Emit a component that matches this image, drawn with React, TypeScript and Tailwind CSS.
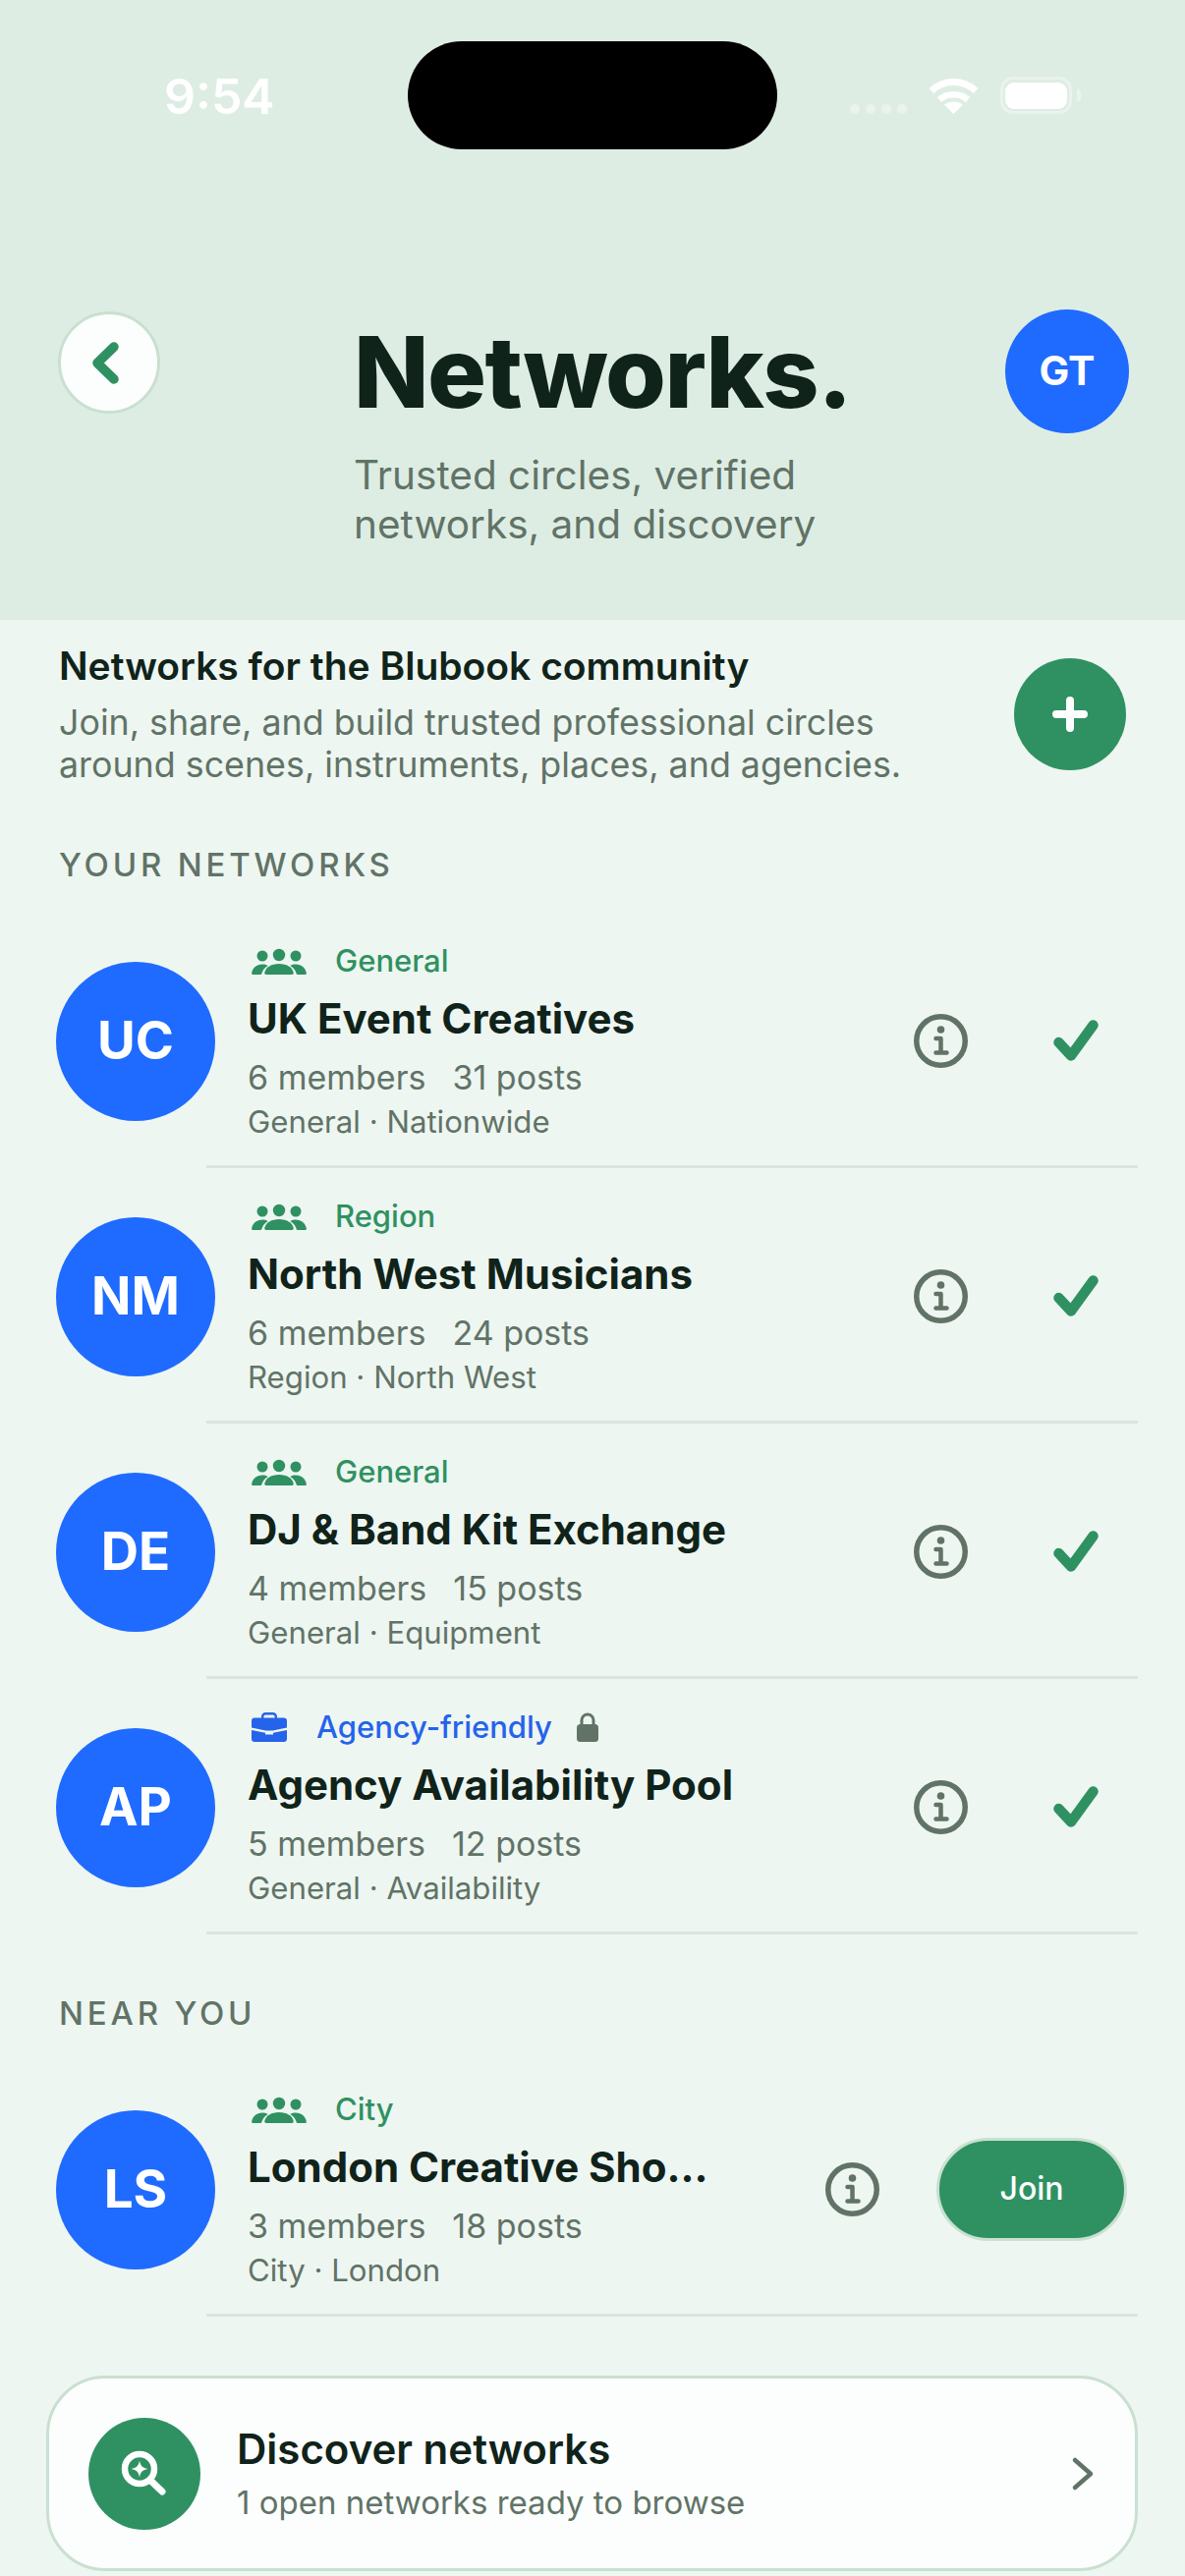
import type { ReactNode } from "react";

// Networks screen — header, community intro, joined rows, nearby rows, discover card

type Network = {
  initials: string;
  kind: "people" | "agency";
  tag: string;
  locked?: boolean;
  name: string;
  members: string;
  posts: string;
  detail: string;
};

const YOUR_NETWORKS: Network[] = [
  { initials: "UC", kind: "people", tag: "General", name: "UK Event Creatives", members: "6 members", posts: "31 posts", detail: "General · Nationwide" },
  { initials: "NM", kind: "people", tag: "Region", name: "North West Musicians", members: "6 members", posts: "24 posts", detail: "Region · North West" },
  { initials: "DE", kind: "people", tag: "General", name: "DJ & Band Kit Exchange", members: "4 members", posts: "15 posts", detail: "General · Equipment" },
  { initials: "AP", kind: "agency", tag: "Agency-friendly", locked: true, name: "Agency Availability Pool", members: "5 members", posts: "12 posts", detail: "General · Availability" },
];

const NEAR_YOU: Network[] = [
  { initials: "LS", kind: "people", tag: "City", name: "London Creative Sho...", members: "3 members", posts: "18 posts", detail: "City · London" },
];

function PeopleIcon() {
  return (
    <svg width="56" height="28" viewBox="0 0 56 28" fill="#2F9162" className="shrink-0">
      <circle cx="11" cy="9" r="5.5" />
      <circle cx="28" cy="8" r="6.2" />
      <circle cx="45" cy="9" r="5.5" />
      <path d="M15 28C13.5 28 13 27 13.4 25.5C14.8 20.5 20 17 28 17C36 17 41.2 20.5 42.6 25.5C43 27 42.5 28 41 28Z" />
      <path d="M1.5 28C0.5 28 0 27.4 0.2 26.2C1.2 21 5 17.5 11 17.5C13.2 17.5 15 18 16.6 18.9C13.6 20.6 11.4 23.2 10.5 26.5C10.3 27.2 10 28 9.5 28Z" />
      <path d="M54.5 28C55.5 28 56 27.4 55.8 26.2C54.8 21 51 17.5 45 17.5C42.8 17.5 41 18 39.4 18.9C42.4 20.6 44.6 23.2 45.5 26.5C45.7 27.2 46 28 46.5 28Z" />
    </svg>
  );
}

function BriefcaseIcon() {
  return (
    <svg width="36" height="30" viewBox="0 0 36 30" fill="#2563EB" className="shrink-0">
      <rect x="11.2" y="1.2" width="13.6" height="8" rx="3" fill="none" stroke="#2563EB" strokeWidth="2.4" />
      <path d="M3 5.5H33C34.7 5.5 36 6.8 36 8.5V15.5L21.5 18.5H14.5L0 15.5V8.5C0 6.8 1.3 5.5 3 5.5Z" />
      <path d="M0 18L14 20.8V22.5H22V20.8L36 18V27C36 28.7 34.7 30 33 30H3C1.3 30 0 28.7 0 27Z" />
    </svg>
  );
}

function LockIcon() {
  return (
    <svg width="22" height="30" viewBox="0 0 22 30" fill="#617367" className="ml-[25px] shrink-0">
      <path d="M5 14V8a6 6 0 0 1 12 0v6" fill="none" stroke="#617367" strokeWidth="3" />
      <rect x="0" y="12" width="22" height="18" rx="3.5" />
    </svg>
  );
}

function InfoIcon() {
  return (
    <svg width="55" height="55" viewBox="0 0 55 55" fill="none" stroke="#617367" strokeWidth="5.5" className="mt-[3px] shrink-0">
      <circle cx="27.5" cy="27.5" r="24.75" />
      <circle cx="27.5" cy="16" r="3.8" fill="#617367" stroke="none" />
      <path d="M22.5 25H27.5V39.5M22.5 39.5H33.5" strokeWidth="4.5" strokeLinecap="round" strokeLinejoin="round" />
    </svg>
  );
}

function CheckIcon() {
  return (
    <svg width="46" height="44" viewBox="0 0 46 44" fill="none" stroke="#2F9162" strokeWidth="10.5" strokeLinecap="round" strokeLinejoin="round" className="ml-[87px] mr-[40px] mt-[5px] shrink-0">
      <path d="M5.5 23L18 36.5L40.5 5.5" />
    </svg>
  );
}

function StatusBar() {
  return (
    <div className="flex items-start pl-[167px] pt-[42px]">
      <span className="mt-[37px] h-[38px] w-[248px] text-[50px] leading-[38px] font-semibold text-white">9:54</span>
      <div className="h-[110px] w-[376px] rounded-[55px] bg-black" />
      <div className="ml-[74px] mt-[36px] flex h-[38px] items-start">
        <div className="mt-[28px] flex gap-[6px]">
          <span className="size-[10px] rounded-full bg-[#EAF3ED]" />
          <span className="size-[10px] rounded-full bg-[#EAF3ED]" />
          <span className="size-[10px] rounded-full bg-[#EAF3ED]" />
          <span className="size-[10px] rounded-full bg-[#EAF3ED]" />
        </div>
        <svg width="51" height="38" viewBox="0 0 51 38" fill="none" stroke="#fff" className="ml-[22px] mt-[1px]">
          <path d="M3 13.5C15.5 1.5 35.5 1.5 48 13.5" strokeWidth="7" />
          <path d="M11 22.5C19 15.5 32 15.5 40 22.5" strokeWidth="6.5" />
          <path d="M25.5 37L16 27.5C22 23.5 29 23.5 35 27.5Z" fill="#fff" stroke="none" />
        </svg>
        <div className="ml-[22px] flex h-[38px] w-[73px] items-center justify-center rounded-[13px] border-[3px] border-[#EAF3ED]">
          <div className="h-[27px] w-[63px] rounded-[9px] bg-white" />
        </div>
        <div className="ml-[5px] mt-[13px] h-[12px] w-[4px] rounded-r-[3px] bg-[#EAF3ED]" />
      </div>
    </div>
  );
}

function Header() {
  return (
    <header className="h-[631px] bg-[#DEEDE3]">
      <StatusBar />
      <div className="mt-[163px] flex items-start pl-[59px] pr-[57px]">
        <button className="mt-[2px] flex size-[104px] shrink-0 items-center justify-center rounded-full border-[3px] border-[#C9E0D0] bg-[#FBFEFC]">
          <svg width="36" height="48" viewBox="0 0 36 48" fill="none" stroke="#2F9162" strokeWidth="9.5" strokeLinecap="round" strokeLinejoin="round" className="-ml-[1px]">
            <path d="M23 8L6 24.5L23 41" />
          </svg>
        </button>
        <div className="ml-[197px] flex-1">
          <h1 className="text-[100px] leading-[128px] font-extrabold tracking-[-1.5px] text-[#10231A]">Networks.</h1>
          <p className="mt-[16px] text-[40.5px] leading-[50px] text-[#617367]">
            Trusted circles, verified
            <br />
            networks, and discovery
          </p>
        </div>
        <div className="flex size-[126px] shrink-0 items-center justify-center rounded-full bg-[#1F6BFF] text-[41px] font-bold text-white">GT</div>
      </div>
    </header>
  );
}

function SectionLabel({ children }: { children: ReactNode }) {
  return <h2 className="mt-[60px] ml-[60px] text-[33px] leading-[40px] font-medium tracking-[3.8px] text-[#617367]">{children}</h2>;
}

function NetworkRow({ network, action }: { network: Network; action: ReactNode }) {
  const agency = network.kind === "agency";
  return (
    <div className="flex items-center pl-[57px]">
      <div className="mt-[1px] flex size-[162px] shrink-0 items-center justify-center rounded-full bg-[#1F6BFF] text-[53px] font-bold text-white">
        {network.initials}
      </div>
      <div className="-ml-[9px] mr-[48px] flex h-[260px] flex-1 items-center border-b-[3px] border-[#D9E6DD] pl-[42px]">
        <div className="flex-1 self-start pt-[30px]">
          <div className="flex h-[38px] items-center pl-[4px]">
            {agency ? <BriefcaseIcon /> : <PeopleIcon />}
            <span className={agency ? "ml-[30px] text-[31px] font-medium text-[#2563EB]" : "ml-[29px] text-[31px] font-medium text-[#2F9162]"}>
              {network.tag}
            </span>
            {network.locked && <LockIcon />}
          </div>
          <p className="mt-[15px] text-[42px] leading-[50px] font-bold text-[#10231A]">{network.name}</p>
          <p className="mt-[15px] text-[34px] leading-[40px] text-[#617367]">
            {network.members}
            <span className="ml-[27px]">{network.posts}</span>
          </p>
          <p className="mt-[7px] text-[31.2px] leading-[36px] text-[#617367]">{network.detail}</p>
        </div>
        {action}
      </div>
    </div>
  );
}

function App() {
  return (
    <div className="h-[2622px] w-[1206px] overflow-hidden bg-[#EEF6F1] font-['Inter',sans-serif]">
      <Header />

      <section className="flex items-start pt-[22px] pl-[60px] pr-[60px]">
        <div className="flex-1">
          <h2 className="text-[39px] leading-[50px] font-semibold text-[#10231A]">Networks for the Blubook community</h2>
          <p className="mt-[11px] text-[35.8px] leading-[43px] text-[#617367]">
            Join, share, and build trusted professional circles
            <br />
            around scenes, instruments, places, and agencies.
          </p>
        </div>
        <button className="mt-[17px] flex size-[114px] shrink-0 items-center justify-center rounded-full bg-[#2F9162]">
          <svg width="40" height="40" viewBox="0 0 40 40" fill="none" stroke="#fff" strokeWidth="8" strokeLinecap="round">
            <path d="M20 6V34M6 20H34" />
          </svg>
        </button>
      </section>

      <SectionLabel>YOUR NETWORKS</SectionLabel>
      <div className="mt-[29px]">
        {YOUR_NETWORKS.map((network) => (
          <NetworkRow
            key={network.initials}
            network={network}
            action={
              <>
                <InfoIcon />
                <CheckIcon />
              </>
            }
          />
        ))}
      </div>

      <SectionLabel>NEAR YOU</SectionLabel>
      <div className="mt-[29px]">
        {NEAR_YOU.map((network) => (
          <NetworkRow
            key={network.initials}
            network={network}
            action={
              <>
                <InfoIcon />
                <button className="ml-[58px] mr-[11px] mt-[3px] flex h-[105px] w-[194px] shrink-0 items-center justify-center rounded-[53px] border-[3px] border-[#C9E0D0] bg-[#2F9162] text-[32px] font-medium text-white">
                  Join
                </button>
              </>
            }
          />
        ))}
      </div>

      <div className="mt-[60px] ml-[47px] flex h-[199px] w-[1111px] items-center rounded-[60px] border-[3px] border-[#C9E0D0] bg-[#FBFEFC] pl-[40px] pr-[41px]">
        <div className="flex size-[114px] shrink-0 items-center justify-center rounded-full bg-[#2F9162]">
          <svg width="60" height="60" viewBox="0 0 60 60" fill="none" stroke="#fff">
            <circle cx="25" cy="25" r="15" strokeWidth="6.5" />
            <path d="M37 37.5L48 48" strokeWidth="7" strokeLinecap="round" />
            <path d="M25 16.5C26 22 28 24 33.5 25C28 26 26 28 25 33.5C24 28 22 26 16.5 25C22 24 24 22 25 16.5Z" fill="#fff" stroke="none" />
          </svg>
        </div>
        <div className="ml-[37px] flex-1">
          <p className="text-[42px] leading-[50px] font-semibold text-[#10231A]">Discover networks</p>
          <p className="mt-[9px] text-[33px] leading-[40px] text-[#617367]">1 open networks ready to browse</p>
        </div>
        <svg width="24" height="36" viewBox="0 0 24 36" fill="none" stroke="#617367" strokeWidth="4.5" strokeLinecap="round" strokeLinejoin="round" className="shrink-0">
          <path d="M4 4L20 18L4 32" />
        </svg>
      </div>
    </div>
  );
}

export default App;
